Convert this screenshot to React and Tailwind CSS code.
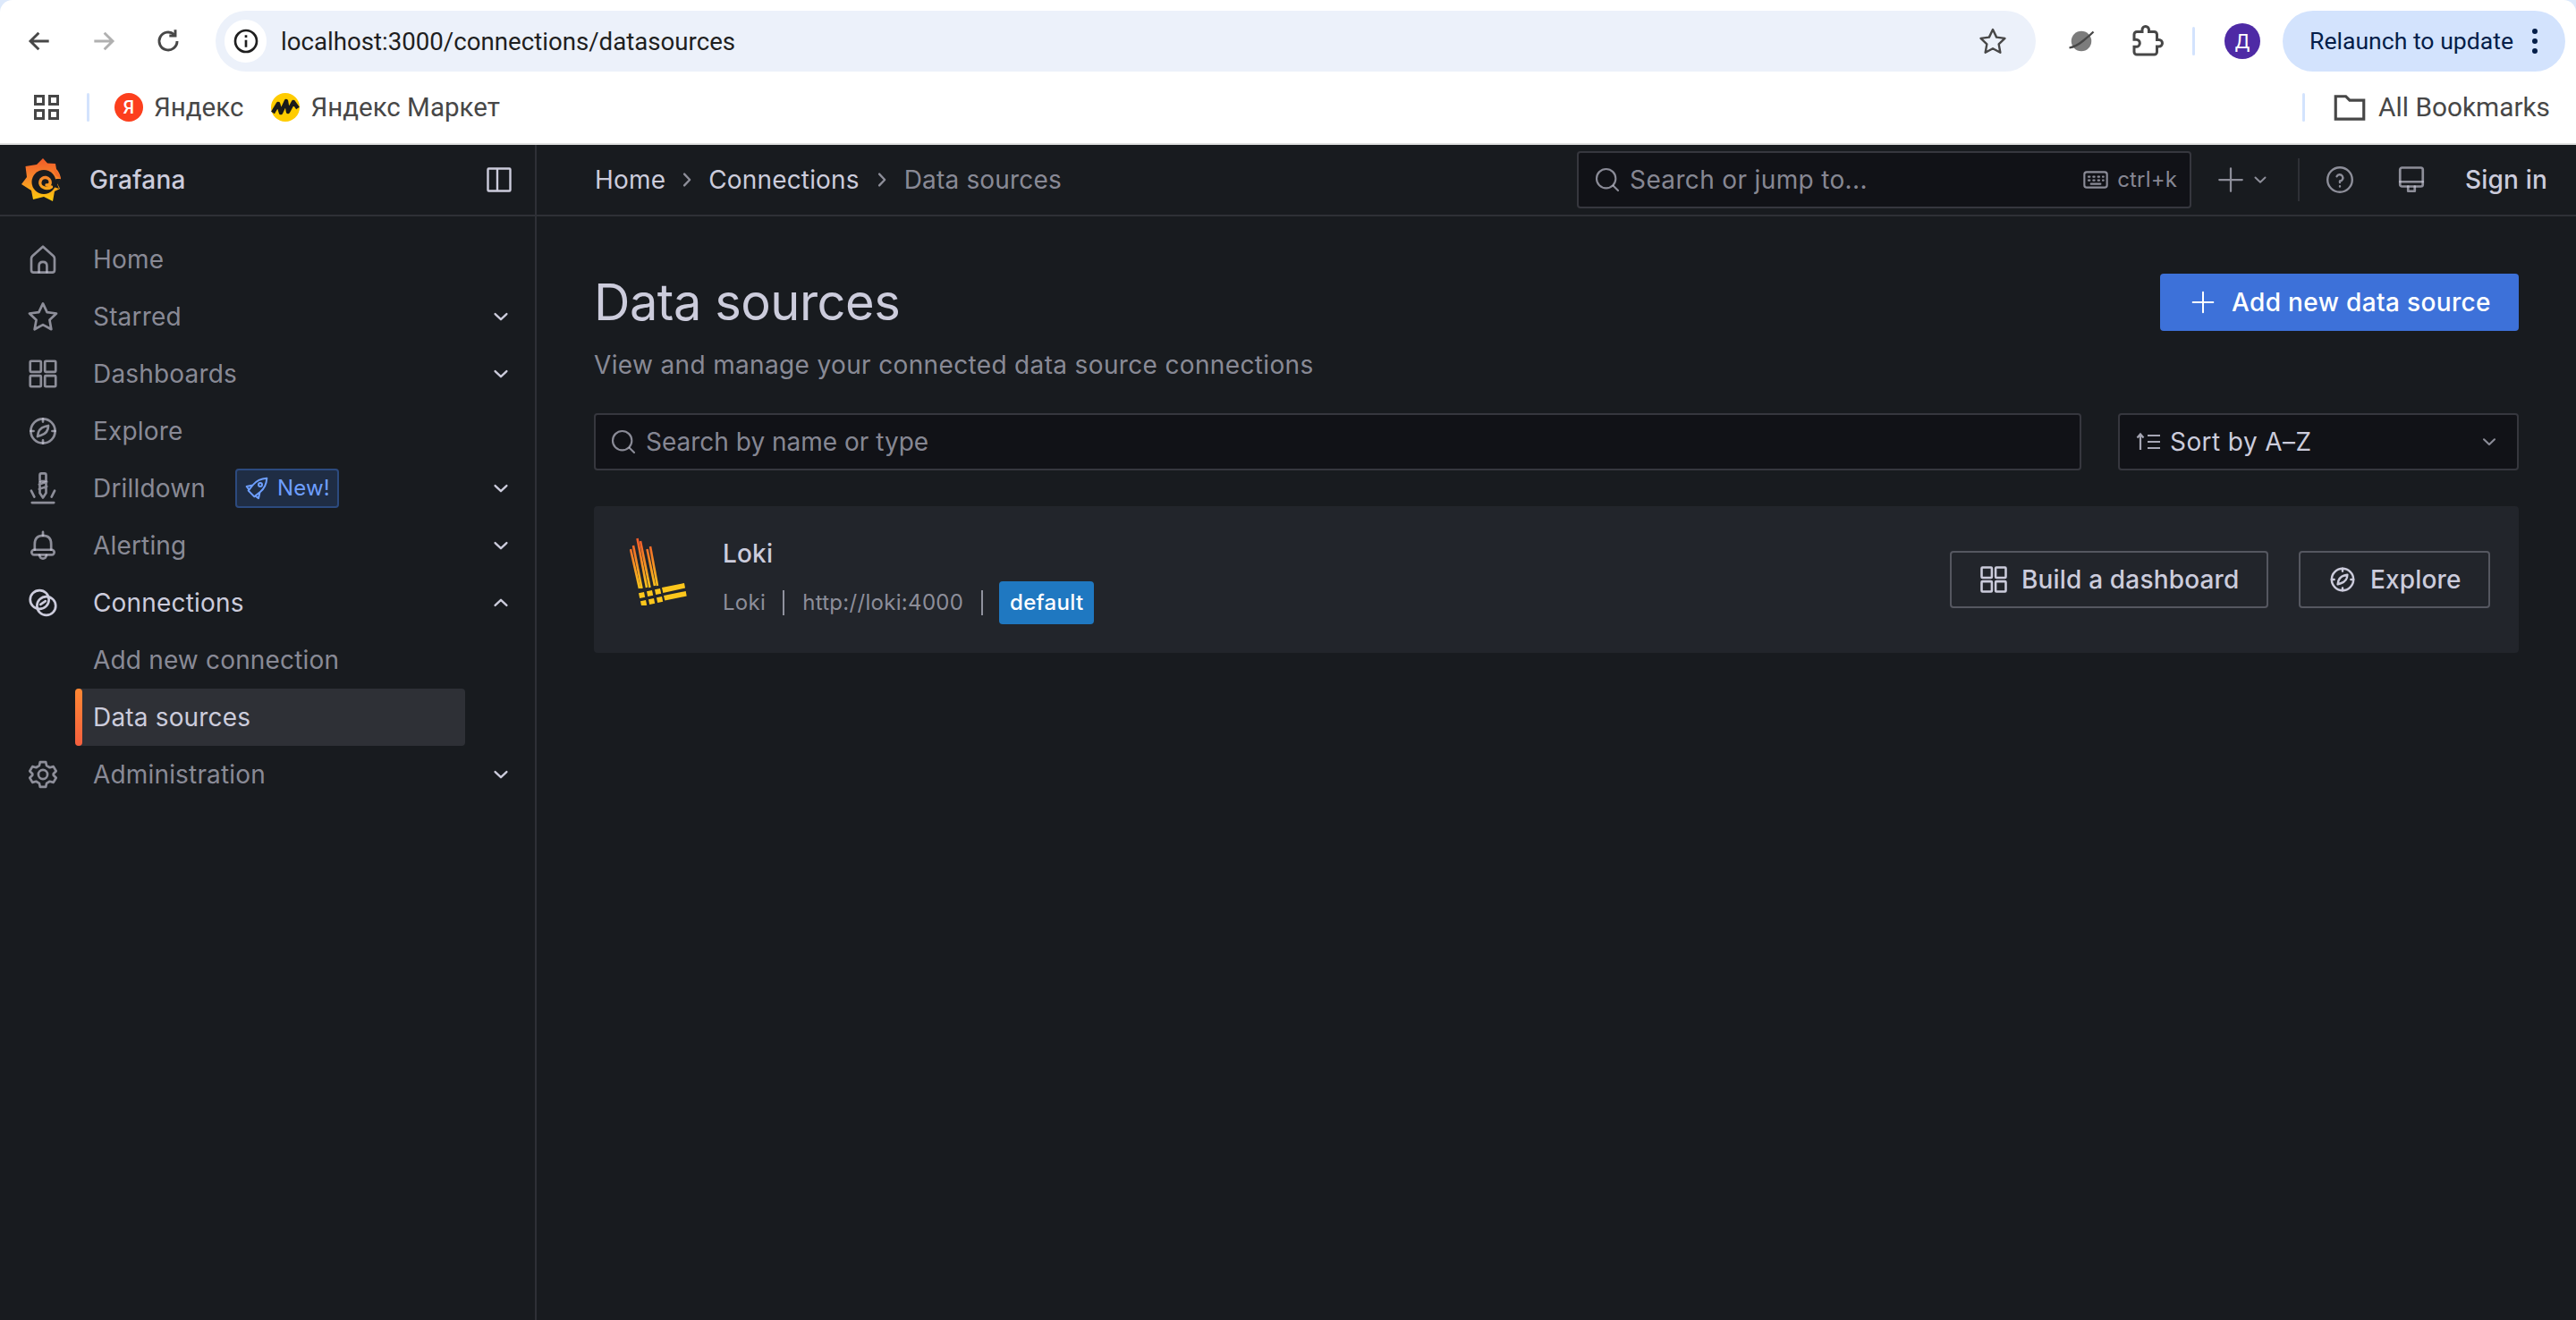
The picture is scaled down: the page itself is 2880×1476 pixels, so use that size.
import React from "react";

const S = ({ size = 32, className = "", sw = 1.7, children, vb = "0 0 24 24" }) => (
  <svg width={size} height={size} viewBox={vb} fill="none" stroke="currentColor" strokeWidth={sw} strokeLinecap="round" strokeLinejoin="round" className={"shrink-0 " + className}>
    {children}
  </svg>
);
const M = "-m-[3px]";
const HomeI = () => <S size={38} className={M}><path d="M12 3 L4.6 9.6 Q3.8 10.4 3.8 11.5 V19.6 Q3.8 21.2 5.4 21.2 H18.6 Q20.2 21.2 20.2 19.6 V11.5 Q20.2 10.4 19.4 9.6 Z" /><path d="M9.2 21 V16.5 Q9.2 13.8 12 13.8 Q14.8 13.8 14.8 16.5 V21" /></S>;
const StarI = ({ size = 38, className = M }) => <S size={size} className={className}><path d="M12 2.8 L14.9 8.9 L21.5 9.8 L16.7 14.4 L17.9 21 L12 17.8 L6.1 21 L7.3 14.4 L2.5 9.8 L9.1 8.9 Z" /></S>;
const AppsI = ({ size = 38, className = M }) => <S size={size} className={className} sw={1.7}><rect x="3" y="3" width="7.6" height="7.6" rx=".6" /><rect x="13.4" y="3" width="7.6" height="7.6" rx=".6" /><rect x="3" y="13.4" width="7.6" height="7.6" rx=".6" /><rect x="13.4" y="13.4" width="7.6" height="7.6" rx=".6" /></S>;
const CompassI = ({ size = 38, className = M }) => <S size={size} className={className}><circle cx="12" cy="12" r="8.6" /><path d="M12 3.4 V5.4 M12 18.6 V20.6 M3.4 12 H5.4 M18.6 12 H20.6" /><path d="M15.8 8.2 Q15.8 13.5 10.6 15 L8.2 15.8 Q8.6 10 13.4 8.8 Z" /></S>;
const DrillI = () => <S size={42} className="-m-[5px]" sw={1.5}><rect x="10" y="2.5" width="4" height="5" rx="1" /><path d="M9.6 9.5 L14.4 7.8 M9.6 12.5 L14.4 10.8 M10 8 V15 L12 18 L14 15 V8" /><path d="M4.5 13.5 L6.5 17.5 M19.5 13.5 L17.5 17.5" /><path d="M5 21.2 H19" /></S>;
const BellI = () => <S size={38} className={M}><path d="M12 2.5 V5" /><path d="M6.2 15 V11 Q6.2 5 12 5 Q17.8 5 17.8 11 V15" /><rect x="4" y="15" width="16" height="3.6" rx="1.8" /><path d="M9.5 18.8 Q10 21.2 12 21.2 Q14 21.2 14.5 18.8" /></S>;
const LinkI = () => <S size={38} className={M} sw={1.7}><circle cx="9.6" cy="9.8" r="6.6" /><circle cx="14.4" cy="14.2" r="6.6" /><path d="M10.3 13.2 L13.8 10.8" /></S>;
const GearI = () => <S size={38} className={M}><circle cx="12" cy="12" r="3.2" /><path d="M10 3.2 H14 L14.6 5.8 L16.8 7.1 L19.4 6.4 L21.3 9.6 L19.4 11.5 V12.5 L21.3 14.400 L19.4 17.6 L16.8 16.9 L14.6 18.2 L14 20.8 H10 L9.4 18.2 L7.2 16.9 L4.6 17.6 L2.7 14.400 L4.6 12.5 V11.5 L2.7 9.6 L4.6 6.4 L7.2 7.1 L9.4 5.8 Z" /></S>;
const Chevron = ({ up, size = 32, className = "" }) => <S size={size} sw={2} className={className}><path d={up ? "M6.5 14.5 L12 9.3 L17.5 14.5" : "M6.5 9.5 L12 14.7 L17.5 9.5"} /></S>;
const SearchI = ({ size = 32 }) => <S size={size} sw={1.6}><circle cx="11" cy="11" r="8" /><path d="M17 17 L21 21" /></S>;

const NavItem = ({ icon, label, chevron, up, active, badge }) => (
  <div className="h-16 flex items-center pl-[32px] pr-[24px]">
    <span className={"w-8 h-8 flex items-center justify-center " + (active ? "text-[#ccccdc]" : "text-[#ccccdc]/65")}>{icon}</span>
    <span className={"ml-[40px] text-[28px] leading-[40px] " + (active ? "text-[#ccccdc]" : "text-[#ccccdc]/65")}>{label}</span>
    {badge}
    {chevron && <span className="ml-auto text-[#ccccdc]"><Chevron up={up} size={28} /></span>}
  </div>
);

const GrafanaLogo = () => (
  <svg width="46" height="48" viewBox="23 17 46 48" className="shrink-0">
    <defs>
      <linearGradient id="gf" gradientUnits="userSpaceOnUse" x1="0" y1="17" x2="0" y2="65">
        <stop offset="0" stopColor="#f05a28" />
        <stop offset=".45" stopColor="#f7872b" />
        <stop offset="1" stopColor="#fbca0a" />
      </linearGradient>
    </defs>
    <path fill="url(#gf)" d="M48 17 L53 22.5 L62 23 L63 29 Q67 33 68 40 L64 45 L67 51 L61 54 L59 65 L49 60 L37 63 L35 53 L24 46 L30 38 L28.500 26 L41 24 Z" />
    <circle cx="49" cy="43.500" r="13.500" fill="#181b1f" />
    <path d="M62.500 40 L68 40 L64 46 L66 51 L60 49 Z" fill="#181b1f" />
    <path d="M68 40 Q66 32 60 28 L62 36 Z" fill="#f46a28" />
    <path fill="none" stroke="url(#gf)" strokeWidth="3.400" strokeLinecap="round" d="M57.500 49 Q53 52 48.500 49.500 A5.700 5.700 0 1 1 56.200 44.500 Q55.500 47.500 52 47" />
  </svg>
);

const LokiLogo = () => {
  const bars = [[25, 34, 35, 78], [28, 30, 37.5, 78], [32.5, 22, 43, 77], [36, 25, 46.5, 77], [43.5, 34, 52, 75], [47, 31, 55, 75]];
  const sq = [[34, 82], [43, 80], [52, 78], [36, 91], [45, 89], [54, 87]];
  return (
    <svg width="64" height="76" viewBox="24 21 64 76" className="shrink-0 mb-[18px]">
      <defs>
        <linearGradient id="lk" gradientUnits="userSpaceOnUse" x1="0" y1="22" x2="0" y2="78">
          <stop offset="0" stopColor="#f2592a" />
          <stop offset="1" stopColor="#fcc61c" />
        </linearGradient>
      </defs>
      {bars.map((b, i) => <line key={i} x1={b[0]} y1={b[1]} x2={b[2]} y2={b[3]} stroke="url(#lk)" strokeWidth="2.600" />)}
      {sq.map((s, i) => <polygon key={i} fill="#fcc61c" points={`${s[0]},${s[1] + 1.300} ${s[0] + 6},${s[1]} ${s[0] + 7.200},${s[1] + 5.700} ${s[0] + 1.200},${s[1] + 7}`} />)}
      <polygon fill="#fcc61c" points="60,77 85,72 86,77.500 61.300,83" />
      <polygon fill="#fcc61c" points="62,86 86.700,81 87.700,86.500 63.300,91.500" />
    </svg>
  );
};

const Btn = ({ icon, label, className }) => (
  <div className={"h-16 flex items-center border-2 border-[#ccccdc]/30 rounded-[4px] text-[#ccccdc] text-[28px] font-medium " + className}>
    {icon}
    <span>{label}</span>
  </div>
);

export default function App() {
  const chrome = "font-['Roboto',sans-serif]";
  return (
    <div className="w-[2880px] h-[1476px] overflow-hidden flex flex-col bg-[#dde9fb] font-['Inter',sans-serif] tracking-[0.01071em]">
      {/* browser chrome */}
      <div className={"h-[160px] shrink-0 bg-white rounded-t-[14px] flex flex-col tracking-normal " + chrome}>
        <div className="h-[80px] pt-[12px] flex items-start">
          <div className="h-[68px] flex items-center text-[#474747]">
            <svg width="32" height="32" viewBox="0 0 24 24" fill="none" stroke="currentColor" strokeWidth="2.200" className="ml-[28px]"><path d="M20 12H5M11.500 5L4.500 12L11.500 19" /></svg>
            <svg width="32" height="32" viewBox="0 0 24 24" fill="none" stroke="#b0b0b0" strokeWidth="2.200" className="ml-[40px]"><path d="M4 12H19M12.500 5L19.500 12L12.500 19" /></svg>
            <svg width="32" height="32" viewBox="0 0 24 24" fill="none" stroke="currentColor" strokeWidth="2.200" className="ml-[40px]"><path d="M19.500 12A7.500 7.500 0 1 1 17 6.400" /><path d="M18 2.500V7.500H13" /></svg>
          </div>
          <div className="ml-[37px] w-[2035px] h-[68px] rounded-[34px] bg-[#ecf1fa] flex items-center pl-[10px] pr-[31px]">
            <div className="w-[47px] h-[48px] rounded-full bg-white flex items-center justify-center text-[#1f1f1f]">
              <svg width="32" height="32" viewBox="0 0 24 24" fill="none" stroke="currentColor" strokeWidth="2"><circle cx="12" cy="12" r="9" /><path d="M12 11V17M12 7V9" /></svg>
            </div>
            <span className="ml-[16px] pt-[2px] text-[27.650px] text-[#1f1f1f] leading-[40px]">localhost:3000/connections/datasources</span>
            <span className="ml-auto text-[#474747]"><StarI size={34} className="" /></span>
          </div>
          <div className="h-[68px] flex items-center">
            <svg width="36" height="36" viewBox="0 0 24 24" className="ml-[33px]"><circle cx="12" cy="12" r="7.500" fill="#7c7c7c" /><path d="M3 17 Q8 16 13 12 Q18 8 21 5" stroke="#474747" strokeWidth="1.500" fill="none" /></svg>
            <svg width="36" height="36" viewBox="0 0 24 24" fill="none" stroke="#474747" strokeWidth="2" className="ml-[38px]"><path d="M20.500 11H19V7c0-1.100-.9-2-2-2h-4V3.500a2.500 2.500 0 0 0-5 0V5H4c-1.100 0-2 .9-2 2v3.800h1.500c1.490 0 2.700 1.210 2.700 2.700S4.990 16.200 3.500 16.200H2V20c0 1.100.9 2 2 2h13c1.100 0 2-.9 2-2v-4h1.500a2.500 2.500 0 0 0 0-5z" /></svg>
            <div className="ml-[32px] w-[3px] h-[32px] rounded bg-[#d3e3fd]" />
            <div className="ml-[33px] w-[40px] h-[40px] rounded-full bg-[#4e2aa5] text-white text-[22px] flex items-center justify-center">Д</div>
            <div className="ml-[25px] w-[316px] h-[68px] rounded-[34px] bg-[#d3e3fd] flex items-center pl-[30px] text-[#041e49]">
              <span className="text-[26.600px] whitespace-nowrap">Relaunch to update</span>
              <div className="ml-[21px] flex flex-col gap-[5px]">
                <span className="w-[6px] h-[6px] rounded-full bg-[#041e49]" />
                <span className="w-[6px] h-[6px] rounded-full bg-[#041e49]" />
                <span className="w-[6px] h-[6px] rounded-full bg-[#041e49]" />
              </div>
            </div>
          </div>
        </div>
        <div className="h-[80px] flex items-center text-[#474747] text-[29.500px]">
          <svg width="28" height="28" viewBox="0 0 28 28" fill="none" stroke="#474747" strokeWidth="3" className="ml-[38px]"><rect x="1.500" y="1.500" width="9" height="9" /><rect x="17.500" y="1.500" width="9" height="9" /><rect x="1.500" y="17.500" width="9" height="9" /><rect x="17.500" y="17.500" width="9" height="9" /></svg>
          <div className="ml-[31px] w-[3px] h-[32px] rounded bg-[#d3e3fd]" />
          <div className="ml-[28px] w-[32px] h-[32px] rounded-full bg-[#fc3f1d] text-white text-[20px] font-medium flex items-center justify-center">Я</div>
          <span className="ml-[12px]">Яндекс</span>
          <svg width="32" height="32" viewBox="0 0 32 32" className="ml-[31px]"><circle cx="16" cy="16" r="16" fill="#ffcc00" /><path d="M2 22 L8 12 L11 22 L17 9 L19 21 L25 10 L30 17" stroke="#1a1a1a" strokeWidth="4.500" fill="none" strokeLinejoin="round" /></svg>
          <span className="ml-[12px]">Яндекс Маркет</span>
          <div className="ml-auto w-[3px] h-[32px] rounded bg-[#d3e3fd]" />
          <svg width="42" height="42" viewBox="0 0 24 24" fill="none" stroke="#474747" strokeWidth="1.800" className="ml-[29px]"><path d="M3 5H9.500L12 7.500H21V19.500H3Z" /></svg>
          <span className="ml-[11px] mr-[29px] text-[29.800px]">All Bookmarks</span>
        </div>
      </div>
      <div className="h-[2px] shrink-0 bg-[#e1e1e1]" />

      {/* grafana */}
      <div className="flex-1 flex bg-[#181b1f] min-h-0">
        <aside className="w-[600px] shrink-0 border-r-2 border-[#ccccdc]/12 flex flex-col">
          <div className="h-[80px] shrink-0 border-b-2 border-[#ccccdc]/12 flex items-center pl-[23px]">
            <GrafanaLogo />
            <span className="ml-[31px] text-[28px] font-medium text-[#ccccdc]">Grafana</span>
            <svg width="28" height="28" viewBox="0 0 28 28" fill="none" stroke="#ccccdc" strokeWidth="2.400" className="ml-auto mr-[26px]"><rect x="1.500" y="1.500" width="25" height="25" rx="1" /><path d="M12 1.500V26.500" /></svg>
          </div>
          <nav className="pt-4 flex flex-col">
            <NavItem icon={<HomeI />} label="Home" />
            <NavItem icon={<StarI />} label="Starred" chevron />
            <NavItem icon={<AppsI />} label="Dashboards" chevron />
            <NavItem icon={<CompassI />} label="Explore" />
            <NavItem
              icon={<DrillI />}
              label="Drilldown"
              chevron
              badge={
                <div className="ml-[33px] w-[116px] h-[44px] rounded-[4px] border-2 border-[#2c4a7e] bg-[#1f2d44] flex items-center pl-[8px] text-[#6e9fff] text-[24px]">
                  <S size={32} sw={1.500} className="-m-[2px]"><path d="M20.500 3.500 Q13 4 9 9 L5 14 L10 19 L15 15 Q20 11 20.500 3.500 Z" /><path d="M8 9.500 L3.500 10.500 L5.500 13 M14.500 16 L13.500 20.500 L11 18.500" /><circle cx="15" cy="9" r="1.500" /></S>
                  <span className="ml-[9px]">New!</span>
                </div>
              }
            />
            <NavItem icon={<BellI />} label="Alerting" chevron />
            <NavItem icon={<LinkI />} label="Connections" chevron up active />
            <div className="h-16 flex items-center pl-[104px] text-[28px] text-[#ccccdc]/65">Add new connection</div>
            <div className="h-16 ml-[84px] w-[436px] rounded-[4px] bg-[#ccccdc]/12 flex items-center relative text-[28px] text-[#ccccdc] pl-[20px]">
              <span className="absolute left-0 top-0 bottom-0 w-[8px] rounded-[4px] bg-gradient-to-b from-[#ff8833] to-[#f55f3e]" />
              Data sources
            </div>
            <NavItem icon={<GearI />} label="Administration" chevron />
          </nav>
        </aside>

        <main className="flex-1 min-w-0 flex flex-col">
          <header className="h-[80px] shrink-0 border-b-2 border-[#ccccdc]/12 flex items-center pl-[65px] pr-[32px] text-[28px]">
            <span className="text-[#ccccdc]">Home</span>
            <Chevron size={28} className="-rotate-90 mx-[10px] text-[#ccccdc]/65" />
            <span className="text-[#ccccdc]">Connections</span>
            <Chevron size={28} className="-rotate-90 mx-[11px] text-[#ccccdc]/65" />
            <span className="text-[#ccccdc]/65">Data sources</span>

            <div className="ml-auto w-[687px] h-[64px] rounded-[4px] border-2 border-[#ccccdc]/20 bg-[#111217] flex items-center pl-[16px] pr-[14px] text-[#ccccdc]/65">
              <SearchI />
              <span className="ml-[9px] text-[28px] tracking-[0.0125em]">Search or jump to...</span>
              <S size={32} sw={1.600} className="ml-auto"><rect x="2.500" y="5.500" width="19" height="13" rx="2" /><path d="M6 9.500H7M10 9.500H11M14 9.500H15M18 9.500H18.500M6 12.500H7M10 12.500H11M14 12.500H15M18 12.500H18.500M8 15.500H16" /></S>
              <span className="ml-[8px] text-[24px]">ctrl+k</span>
            </div>
            <S size={36} sw={1.500} className="-m-[2px] ml-[26px] text-[#ccccdc]/65"><path d="M12 3.500V20.500M3.500 12H20.500" /></S>
            <Chevron size={24} className="ml-[5px] text-[#ccccdc]/65" />
            <div className="ml-[30px] w-[2px] h-[48px] bg-[#ccccdc]/12" />
            <S size={36} sw={1.600} className="-my-[2px] ml-[27px] text-[#ccccdc]/65"><circle cx="12" cy="12" r="9.200" /><path d="M9.700 9.500A2.400 2.400 0 1 1 12 13V14M12 16.800V17" /></S>
            <S size={36} sw={1.800} className="-my-[2px] ml-[44px] text-[#ccccdc]/65"><rect x="3.500" y="3" width="17" height="14" rx="1.500" /><path d="M3.500 13.500H20.500M9.500 17V20.500H14.500V17" /></S>
            <span className="ml-[42px] font-medium text-[#ccccdc] whitespace-nowrap">Sign in</span>
          </header>

          <div className="pl-[64px] pr-[64px] pt-[64px] flex flex-col">
            <div className="h-16 flex items-center justify-between">
              <h1 className="text-[56px] leading-[64px] font-normal text-[#ccccdc] tracking-[-0.00893em]">Data sources</h1>
              <div className="w-[401px] h-16 rounded-[4px] bg-[#3d71d9] flex items-center pl-[32px] text-white text-[28px] font-medium">
                <S size={32} sw={1.500}><path d="M12 3.500V20.500M3.500 12H20.500" /></S>
                <span className="ml-[16px] whitespace-nowrap tracking-[0.0125em]">Add new data source</span>
              </div>
            </div>
            <p className="mt-[18px] h-[40px] text-[28px] leading-[40px] text-[#ccccdc]/65 tracking-[0.0125em]">View and manage your connected data source connections</p>
            <div className="mt-[34px] flex gap-[41px] h-16">
              <div className="flex-1 rounded-[4px] border-2 border-[#ccccdc]/20 bg-[#111217] flex items-center pl-[15px] text-[28px] text-[#ccccdc]/65">
                <SearchI />
                <span className="ml-[9px] tracking-normal">Search by name or type</span>
              </div>
              <div className="w-[448px] rounded-[4px] border-2 border-[#ccccdc]/20 bg-[#111217] flex items-center pl-[18px] pr-[18px] text-[28px] text-[#ccccdc]">
                <svg width="28" height="24" viewBox="0 0 28 24" fill="none" stroke="currentColor" strokeWidth="2.200" className="text-[#ccccdc]/80"><path d="M5 21V4M1.500 7.500L5 3.500L8.500 7.500M13 5H27M13 12H27M13 19H27" /></svg>
                <span className="ml-[10px] tracking-[0.015em]">Sort by A–Z</span>
                <Chevron size={26} className="ml-auto text-[#ccccdc]/65" />
              </div>
            </div>
            <div className="mt-[40px] h-[164px] rounded-[4px] bg-[#22252b] flex items-center pl-[40px] pr-[32px]">
              <LokiLogo />
              <div className="ml-[40px] flex flex-col">
                <div className="text-[28px] leading-[40px] font-medium text-[#ccccdc]">Loki</div>
                <div className="mt-[11px] h-[48px] flex items-center text-[24px] text-[#ccccdc]/65 tracking-[0.0125em]">
                  <span>Loki</span>
                  <div className="ml-[19px] w-[2px] h-[28px] bg-[#ccccdc]/65" />
                  <span className="ml-[20px]">http://loki:4000</span>
                  <div className="ml-[20px] w-[2px] h-[28px] bg-[#ccccdc]/65" />
                  <div className="ml-[18px] w-[106px] h-[48px] rounded-[4px] bg-[#1f78c1] text-white font-medium flex items-center justify-center">default</div>
                </div>
              </div>
              <div className="ml-auto flex gap-[34px]">
                <Btn className="w-[356px] pl-[31px]" icon={<span className="mr-[15px] w-8 h-8 flex items-center justify-center"><AppsI size={36} className="-m-[2px]" /></span>} label="Build a dashboard" />
                <Btn className="w-[214px] pl-[31px]" icon={<span className="mr-[15px]"><CompassI size={34} className="-m-[1px]" /></span>} label="Explore" />
              </div>
            </div>
          </div>
        </main>
      </div>
    </div>
  );
}
